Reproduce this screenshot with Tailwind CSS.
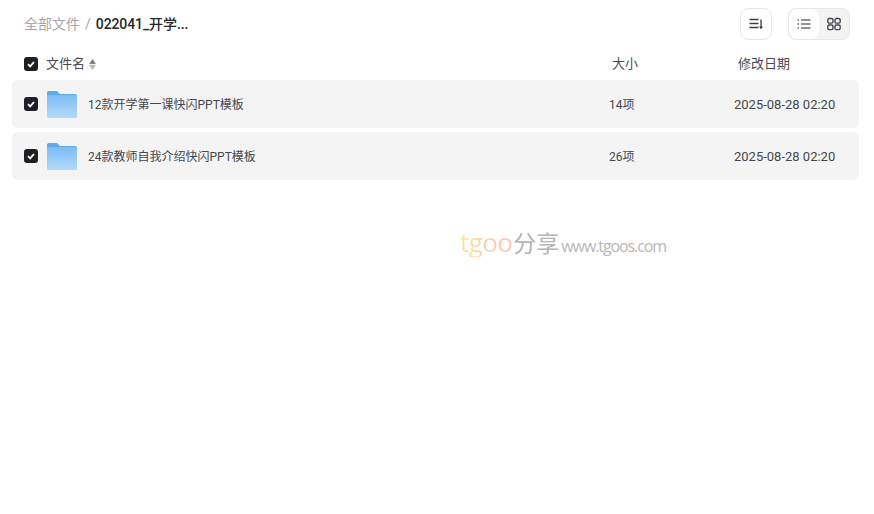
<!doctype html>
<html>
<head>
<meta charset="utf-8" />
<script src="https://cdn.jsdelivr.net/npm/@tailwindcss/browser@4"></script>
</head>
<body class="bg-white font-['Roboto','Noto_Sans_CJK_SC',sans-serif] text-[#25262b] overflow-hidden">
  <div class="relative w-[874px] h-[514px]">
    <!-- breadcrumb + toolbar -->
    <div class="flex items-center h-[48px] pl-6 pr-6">
      <span class="text-sm text-[#a5a5a9]">全部文件</span>
      <span class="text-sm text-[#a5a5a9] mx-[5px]">/</span>
      <span class="text-sm font-medium text-[#25262b] tracking-[-0.1px]">022041_开学...</span>
      <div class="ml-auto flex items-center gap-4">
        <button class="w-8 h-8 flex items-center justify-center rounded-lg border border-[#e8e8ea]">
          <svg width="16" height="16" viewBox="0 0 16 16" fill="none" stroke="#3b3c42" stroke-width="1.3">
            <path d="M1.5 3.5h9M1.5 7.5h9M1.5 11.5h9M13 3.5v8" />
            <path d="M11 10.5l2 2.8 2-2.8z" fill="#3b3c42" stroke="none" />
          </svg>
        </button>
        <div class="flex w-[62px] h-8 rounded-lg border border-[#e8e8ea] bg-[#f3f3f4] overflow-hidden">
          <div class="w-[30px] flex items-center justify-center bg-white rounded-lg">
            <svg width="14" height="14" viewBox="0 0 14 14" fill="none" stroke="#25262b" stroke-width="1.2">
              <path d="M0.5 3h1.5M0.5 7h1.5M0.5 11h1.5M4 3h9.5M4 7h9.5M4 11h9.5" />
            </svg>
          </div>
          <div class="flex-1 flex items-center justify-center">
            <svg width="14" height="14" viewBox="0 0 14 14" fill="none" stroke="#45464d" stroke-width="1.4">
              <rect x="0.8" y="1.5" width="5.2" height="4.6" rx="1.4" />
              <rect x="8" y="1.5" width="5.2" height="4.6" rx="1.4" />
              <rect x="0.8" y="8" width="5.2" height="4.6" rx="1.4" />
              <rect x="8" y="8" width="5.2" height="4.6" rx="1.4" />
            </svg>
          </div>
        </div>
      </div>
    </div>

    <!-- header row -->
    <div class="flex items-center h-[32px] pl-6 text-[13px] text-[#4a4b52]">
      <div class="w-[14px] h-[14px] rounded-[3px] bg-[#1f2026] flex items-center justify-center">
        <svg width="10" height="10" viewBox="0 0 10 10" fill="none" stroke="white" stroke-width="1.8"><path d="M2 5.2l2.2 2.2L8 3" /></svg>
      </div>
      <span class="ml-2">文件名</span>
      <svg class="ml-[4px]" width="7" height="11" viewBox="0 0 7 11"><path d="M3.5 0.5l3 4.2h-6z" fill="#77777b" stroke="#77777b" stroke-width="0.5" /><path d="M3.5 10.5l3-4.2h-6z" fill="#b5b5b8" stroke="#b5b5b8" stroke-width="0.5" /></svg>
      <span class="ml-[516px] w-[126px]">大小</span>
      <span>修改日期</span>
    </div>

    <!-- rows -->
    <div class="flex flex-col gap-1 ml-3 mr-[15px]">
      <div class="flex items-center h-12 bg-[#f4f4f4] rounded-md pl-3 text-xs text-[#45464d]">
        <div class="w-[14px] h-[14px] rounded-[3px] bg-[#1f2026] flex items-center justify-center">
          <svg width="10" height="10" viewBox="0 0 10 10" fill="none" stroke="white" stroke-width="1.8"><path d="M2 5.2l2.2 2.2L8 3" /></svg>
        </div>
        <svg class="ml-[9px] mt-px" width="30" height="27" viewBox="0 0 30 27">
          <defs>
            <linearGradient id="folderA" x1="0" y1="0" x2="0" y2="1"><stop offset="0" stop-color="#7cbcf6" /><stop offset="1" stop-color="#b3dafb" /></linearGradient>
          </defs>
          <path d="M0 2a2 2 0 0 1 2-2h8l3 3h15a2 2 0 0 1 2 2v4H0z" fill="#5ea9ea" />
          <rect x="0" y="4" width="30" height="23" rx="1" fill="url(#folderA)" />
          <rect x="22" y="8" width="4" height="2" fill="#8cc2f2" />
        </svg>
        <span class="ml-[11px] w-[521px] pt-px">12款开学第一课快闪PPT模板</span>
        <span class="w-[125px] pt-px">14项</span>
        <span class="pt-px text-[13px]">2025-08-28 02:20</span>
      </div>
      <div class="flex items-center h-12 bg-[#f4f4f4] rounded-md pl-3 text-xs text-[#45464d]">
        <div class="w-[14px] h-[14px] rounded-[3px] bg-[#1f2026] flex items-center justify-center">
          <svg width="10" height="10" viewBox="0 0 10 10" fill="none" stroke="white" stroke-width="1.8"><path d="M2 5.2l2.2 2.2L8 3" /></svg>
        </div>
        <svg class="ml-[9px] mt-px" width="30" height="27" viewBox="0 0 30 27">
          <path d="M0 2a2 2 0 0 1 2-2h8l3 3h15a2 2 0 0 1 2 2v4H0z" fill="#5ea9ea" />
          <rect x="0" y="4" width="30" height="23" rx="1" fill="url(#folderA)" />
          <rect x="22" y="8" width="4" height="2" fill="#8cc2f2" />
        </svg>
        <span class="ml-[11px] w-[521px] pt-px">24款教师自我介绍快闪PPT模板</span>
        <span class="w-[125px] pt-px">26项</span>
        <span class="pt-px text-[13px]">2025-08-28 02:20</span>
      </div>
    </div>

    <!-- watermark -->
    <div class="absolute left-[460px] top-[227px] flex items-baseline font-['Open_Sans','Noto_Sans_CJK_SC',sans-serif]">
      <span class="text-[26px] leading-[30px] tracking-[-0.6px] bg-gradient-to-r from-[#fde3a0] to-[#fbc4bd] bg-clip-text text-transparent">tgoo</span>
      <span class="text-[23px] leading-[30px] text-[#b4b4b4] ml-px">分享</span>
      <span class="ml-[2px] text-base leading-[30px] tracking-[-1.1px] text-[#b8b8b8]">www.tgoos.com</span>
    </div>
  </div>
</body>
</html>
